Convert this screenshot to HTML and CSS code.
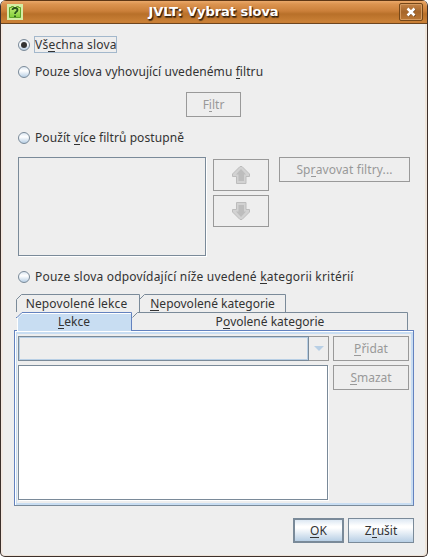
FILE: index.html
```html
<!DOCTYPE html>
<html lang="cs">
<head>
<meta charset="utf-8">
<title>JVLT: Vybrat slova</title>
<link rel="stylesheet" href="styles.css">
</head>
<body>
<div class="window">
  <header class="titlebar">
    <svg class="app-icon" width="16" height="16" viewBox="0 0 16 16"><defs><linearGradient id="leaf" x2="0" y2="1"><stop stop-color="#c5ee78"/><stop offset="1" stop-color="#83cf38"/></linearGradient></defs><rect width="16" height="16" fill="#d4eda4"/><path d="M2.5 3.5h2v-1h2v1h3v-1h2v1h2v10h-11z" fill="url(#leaf)" stroke="#62a52b"/><path d="M5.5 6q0-2 2.5-2t2.5 2q0 1-1.5 2-1 .6-1 2M8 11.4v1.6" fill="none" stroke="#28531c" stroke-width="1.8"/></svg>
    <h1 class="title">JVLT: Vybrat slova</h1>
    <button class="close" aria-label="Zavřít"><svg width="10" height="10" viewBox="0 0 10 10"><path d="M2 2l7 7M9 2l-7 7" stroke="#553313" stroke-width="2.4"/><path d="M1.500 1.500l7 7M8.500 1.500l-7 7" stroke="#fff" stroke-width="2.5"/></svg></button>
  </header>
  <main class="content">
    <label class="option"><i class="radio checked"></i><span class="text focused t-all">Vš<u>e</u>chna slova</span></label>
    <label class="option second"><i class="radio"></i><span class="text t-filter">Pouze slova vyhovující uvedenému <u>f</u>iltru</span></label>
    <button class="button disabled filter"><span>F<u>i</u>ltr</span></button>
    <label class="option third"><i class="radio"></i><span class="text t-multi">Použít <u>v</u>íce filtrů postupně</span></label>
    <section class="filters">
      <div class="list filter-list"></div>
      <div class="arrows">
        <button class="button disabled arrow" aria-label="Nahoru"><svg width="18" height="18" viewBox="0 0 18 18"><path d="M9 .5h1L17.5 8v2.5H14v7H4.5v-7H.5V8L8 .5z" fill="#d2d2d2" stroke="#bcbcbc"/><path d="M9 3l5 5.5h-2V15H6.500V8.500H4z" fill="#bdbdbd"/></svg></button>
        <button class="button disabled arrow" aria-label="Dolů"><svg width="18" height="18" viewBox="0 0 18 18"><path d="M9 17.500h1L17.500 10V7.500H14v-7H4.500v7H.5V10L8 17.500z" fill="#d2d2d2" stroke="#bcbcbc"/><path d="M9 15l5-5.500h-2V3H6.500v6.500H4z" fill="#bdbdbd"/></svg></button>
      </div>
      <button class="button disabled manage"><span>Sp<u>r</u>avovat filtry...</span></button>
    </section>
    <label class="option fourth"><i class="radio"></i><span class="text t-crit">Pouze slova odpovídající níže uvedené <u>k</u>ategorii kritérií</span></label>
    <nav class="tabs">
      <div class="tab-row back">
        <div class="tab t1"><svg width="124" height="18"><path d="M.5 18V5.500L5.500.5H123.500V18" /></svg><span>Nepovolené lekce</span></div>
        <div class="tab t2"><svg width="147" height="18"><path d="M.5 5.500L5.500.5H146.500V18" /></svg><span><u>N</u>epovolené kategorie</span></div>
      </div>
      <div class="tab-row front">
        <div class="tab t3"><svg width="116" height="19"><path class="fill" d="M1 19V5.500L6 .5H115V19z"/><path class="shine" d="M1.500 19V6L6 1.500H115"/><path class="active" d="M0 5.500h1L6 .5H115.500V18"/></svg><span><u>L</u>ekce</span></div>
        <div class="tab t4"><svg width="276" height="18"><path d="M.5 5.500L5.500.5H275.500V18" /></svg><span>P<u>o</u>volené kategorie</span></div>
      </div>
    </nav>
    <section class="panel">
      <div class="left">
        <div class="combo"><div class="value"></div><div class="drop"><svg width="10" height="5" viewBox="0 0 10 5"><path d="M0 0h10L5 5z" fill="#b8cfe5"/></svg></div></div>
        <div class="list words"></div>
      </div>
      <div class="side">
        <button class="button disabled"><span class="add"><u>P</u>řidat</span></button>
        <button class="button disabled"><span class="del"><u>S</u>mazat</span></button>
      </div>
    </section>
    <footer class="actions">
      <button class="button normal ok"><span><u>O</u>K</span></button>
      <button class="button normal cancel"><span>Z<u>r</u>ušit</span></button>
    </footer>
  </main>
</div>
</body>
</html>
```
FILE: styles.css
```css
* { box-sizing: border-box; }
body { margin: 0; background: #fff; font: 12px/16px "Noto Sans", sans-serif; color: #333; overflow: hidden; }
u { text-decoration: none; box-shadow: inset 0 -1px currentColor; display: inline-block; height: 15px; line-height: 16px; vertical-align: top; }
button { font: inherit; color: inherit; padding: 0; }
svg { display: block; flex: none; }
.window { width: 428px; height: 557px; border: 1px solid #3c302c; border-top: 0; border-radius: 6px 6px 5px 5px; background: #eee; overflow: hidden; box-shadow: inset 2px 0 #f3e9e2, inset -2px -1px #eee4d9; }
.titlebar { height: 24px; display: flex; align-items: center; padding: 2px 4px 0 6px; border-top: 1px solid #5e3715; border-bottom: 1px solid #6d451f; background: linear-gradient(#eaa96b 0, #dc9450 3px, #cb803a 10px, #b87029 13px, #cb8137 21px, #c67b31); }
.app-icon { position: relative; top: -1px; }
.title { flex: 1; margin: 0; text-align: center; color: #fff; font: bold 13px/18px "DejaVu Sans", sans-serif; text-shadow: 1px 1px 1px #301b08, 1px 2px 1px #60401f; letter-spacing: -.05px; padding-left: 5px; position: relative; top: -1px; }
.close { width: 24px; height: 18px; border: 1px solid #754718; border-radius: 2px; box-shadow: inset 0 0 0 1px #d49a60; background: linear-gradient(#c58447, #a56529 50%, #bc7834); display: grid; place-items: center; position: relative; top: -1px; }
.content { padding: 12px 13px 0; }
.option { display: flex; align-items: center; height: 17px; margin-left: 3px; }
.radio { width: 12px; height: 12px; flex: none; border: 1px solid #7a8a99; border-radius: 50%; background: linear-gradient(#dde8f3, #fff 38%, #b8cfe5); margin: 0 4px 0 1px; display: grid; place-items: center; }
.radio.checked::after { content: ""; width: 6px; height: 6px; background: #333; border-radius: 50%; }
.text { height: 17px; line-height: 18px; padding-left: 1px; white-space: nowrap; }
.text u { margin-top: 1px; }
.focused { width: 83px; box-shadow: 0 0 0 1px #a3b8cc inset; }
.t-all { letter-spacing: .22px; }
.t-filter { letter-spacing: .08px; }
.t-multi { letter-spacing: .08px; }
.t-crit { letter-spacing: .2px; }
.second { margin-top: 10px; }
.filter { width: 55px; margin: 12px 0 0 172px; }
.third { margin-top: 12px; }
.fourth { margin-top: 12px; }
.button { height: 25px; border: 1px solid #999; background: #eee; border-radius: 0; display: flex; align-items: center; justify-content: center; white-space: nowrap; }
.disabled { color: #999; }
.filters { display: flex; margin: 11px 0 0 4px; height: 99px; }
.list { border: 1px solid #7a8a99; position: relative; }
.list::after { content: ""; position: absolute; inset: 0 -2px -2px 0; border: solid #fff; border-width: 0 1px 1px 0; }
.filter-list { width: 188px; }
.arrows { display: flex; flex-direction: column; gap: 4px; margin: 2px 10px 0 7px; }
.arrow { width: 56px; height: 32px; }
.manage { width: 131px; letter-spacing: .12px; }
.tabs { margin-top: 9px; }
.tab-row { display: flex; height: 18px; margin-left: 2px; }
.tab { position: relative; text-align: center; white-space: nowrap; }
.tab svg { position: absolute; inset: 0 auto auto 0; fill: none; stroke: #7a8a99; }
.tab span { position: relative; display: block; top: 2px; }
.t1 { width: 123px; letter-spacing: .13px; }
.t1 span { left: -1px; }
.t2 { width: 147px; }
.t3 { width: 116px; z-index: 1; }
.t4 { width: 276px; }
.fill { fill: #c8ddf2; stroke: none; }
.shine { stroke: #fff; }
.active { stroke: #6382bf; }
.panel { height: 176px; border: 1px solid #6382bf; border-bottom-color: #7a8a99; padding: 5px 4px 0 3px; display: flex; gap: 4px; box-shadow: inset 0 1px #fff, inset 1px 0 #fff, inset 0 3px #c8ddf2, inset 2px 0 #c8ddf2, inset -2px -2px #c8ddf2; }
.left { width: 311px; }
.combo { height: 25px; display: flex; }
.value { flex: 1; border: 1px solid #7a8a99; box-shadow: inset 0 0 0 1px #b8cfe5; }
.drop { width: 20px; border: 1px solid #999; border-left: 0; display: grid; place-items: center; }
.words { background: #fff; width: 310px; height: 135px; margin-top: 4px; }
.side { width: 76px; display: flex; flex-direction: column; gap: 4px; }
.actions { display: flex; justify-content: flex-end; gap: 4px; margin-top: 12px; }
.normal { border-color: #7a8a99; background: linear-gradient(#dde8f3, #fff 30%, #fff 38%, #b8cfe5); }
.ok { width: 51px; border-width: 2px; }
.cancel { width: 66px; }
```
